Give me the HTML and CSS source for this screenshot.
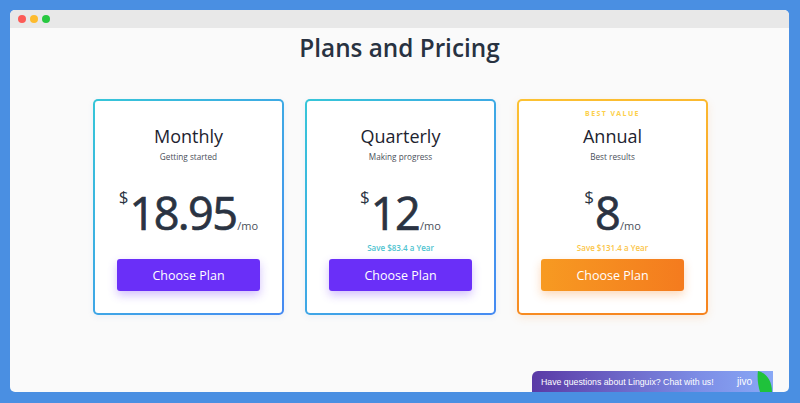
FILE: index.html
```html
<!DOCTYPE html>
<html>
<head>
<meta charset="utf-8">
<link rel="stylesheet" href="styles.css">
</head>
<body>
<div class="window">
  <div class="titlebar">
    <span class="dot red"></span><span class="dot yellow"></span><span class="dot green"></span>
  </div>
  <div class="content">
    <h1 class="title">Plans and Pricing</h1>
    <div class="cards">
      <div class="card blue">
        <div class="badge"></div>
        <div class="name">Monthly</div>
        <div class="sub">Getting started</div>
        <div class="price"><span class="cur">$</span><span class="amt">18.95</span><span class="per">/mo</span></div>
        <div class="save"></div>
        <button class="btn purple">Choose Plan</button>
      </div>
      <div class="card blue">
        <div class="badge"></div>
        <div class="name">Quarterly</div>
        <div class="sub">Making progress</div>
        <div class="price"><span class="cur">$</span><span class="amt">12</span><span class="per">/mo</span></div>
        <div class="save teal">Save $83.4 a Year</div>
        <button class="btn purple">Choose Plan</button>
      </div>
      <div class="card orange">
        <div class="badge">BEST VALUE</div>
        <div class="name">Annual</div>
        <div class="sub">Best results</div>
        <div class="price"><span class="cur">$</span><span class="amt">8</span><span class="per">/mo</span></div>
        <div class="save gold">Save $131.4 a Year</div>
        <button class="btn orangebtn">Choose Plan</button>
      </div>
    </div>
  </div>
  <div class="chat">
    <span class="chat-text">Have questions about Linguix? Chat with us!</span>
    <span class="jivo">jivo</span>
    <svg class="leaf" width="16" height="21" viewBox="0 0 16 21"><path d="M1 0 C9 2 15 9 15 21 L3 21 C1 14 0 7 1 0 Z" fill="#1fc23b"/></svg>
  </div>
</div>
</body>
</html>
```
FILE: styles.css
```css
* { box-sizing: border-box; }
html, body { margin: 0; padding: 0; }
body {
  width: 800px;
  height: 403px;
  background: #4a8fe2;
  padding: 10px 11px 11px 10px;
  font-family: "Open Sans", "Liberation Sans", sans-serif;
  overflow: hidden;
}
.window {
  position: relative;
  width: 779px;
  height: 382px;
  background: #fafafa;
  border-radius: 5px;
  overflow: hidden;
}
.titlebar {
  height: 18px;
  background: #e8e8e8;
  display: flex;
  align-items: center;
  padding-left: 8px;
  gap: 4px;
}
.dot { width: 8px; height: 8px; border-radius: 50%; display: inline-block; }
.dot.red { background: #fc5b57; }
.dot.yellow { background: #fdbb2e; }
.dot.green { background: #27c840; }
.content {
  display: flex;
  flex-direction: column;
  align-items: center;
}
.title {
  margin: 5px 0 0;
  font-size: 24.3px;
  line-height: 30px;
  font-weight: 600;
  color: #283241;
}
.cards {
  display: flex;
  gap: 21px;
  margin-top: 36px;
  margin-left: 2px;
}
.card {
  width: 191px;
  height: 216px;
  border: 2px solid transparent;
  border-radius: 5px;
  display: flex;
  flex-direction: column;
  align-items: center;
  padding-top: 7.5px;
}
.card.blue {
  background: linear-gradient(#fff, #fff) padding-box, linear-gradient(135deg, #36c6d8, #468af2) border-box;
  box-shadow: 0 2px 6px rgba(70, 120, 200, 0.08);
}
.card.orange {
  background: linear-gradient(#fff, #fff) padding-box, linear-gradient(170deg, #fcc232, #f6831f) border-box;
  box-shadow: 0 3px 8px rgba(247, 140, 40, 0.15);
}
.badge {
  height: 10px;
  font-size: 7px;
  line-height: 10px;
  font-weight: 700;
  letter-spacing: 1.4px;
  color: #fcd04a;
}
.name {
  margin-top: 5.5px;
  font-size: 18px;
  line-height: 24px;
  font-weight: 500;
  color: #1d2330;
}
.sub {
  margin-top: 3px;
  font-size: 8.2px;
  line-height: 12px;
  color: #4a4f5a;
}
.price {
  margin-top: 24.5px;
  display: flex;
  align-items: baseline;
  color: #2a3342;
  height: 50px;
}
.cur {
  font-size: 17px;
  align-self: flex-start;
  line-height: 20px;
  margin-top: -1px;
  margin-right: 1px;
}
.amt {
  font-size: 45px;
  line-height: 50px;
  font-weight: 400;
  letter-spacing: -1.6px;
  -webkit-text-stroke: 0.7px #2a3342;
}
.per {
  font-size: 11px;
  color: #4a4f5a;
  margin-left: 1px;
}
.save {
  height: 12px;
  margin-top: 4.5px;
  font-size: 8px;
  line-height: 12px;
  font-weight: 600;
}
.save.teal { color: #4ec3d0; }
.save.gold { color: #fbc548; }
.btn {
  margin-top: 5px;
  width: 143px;
  height: 32px;
  border: none;
  border-radius: 3px;
  color: #fff;
  font-family: "Open Sans", "Liberation Sans", sans-serif;
  font-size: 12.5px;
}
.btn.purple {
  background: #6a2ff8;
  box-shadow: 0 4px 10px rgba(106, 47, 248, 0.3);
}
.btn.orangebtn {
  background: linear-gradient(90deg, #f79a22, #f47b1e);
  box-shadow: 0 4px 10px rgba(247, 130, 30, 0.3);
}
.chat {
  position: absolute;
  left: 522px;
  bottom: 0;
  width: 241px;
  height: 21px;
  border-top-left-radius: 6px;
  background: linear-gradient(90deg, #5a3aa6, #7d8ee6 70%, #88a8f6);
  display: flex;
  align-items: center;
  font-family: "Liberation Sans", Arial, sans-serif;
  color: #fff;
  font-size: 8.75px;
  padding-left: 9px;
}
.chat-text { flex: 1; }
.jivo { font-size: 10px; margin-right: 5px; }
.leaf { align-self: flex-end; }
```
